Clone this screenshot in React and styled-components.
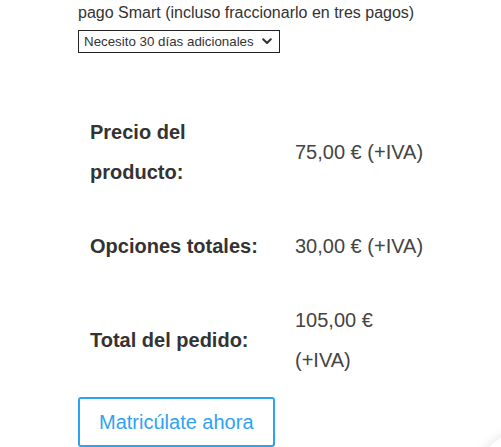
import React from "react";
import styled, { createGlobalStyle } from "styled-components";

const GlobalStyle = createGlobalStyle`
  html, body { margin: 0; padding: 0; background: #fff; }
  body { font-family: "Liberation Sans", Arial, sans-serif; overflow: hidden; }
`;

const Page = styled.div`
  width: 501px;
  height: 447px;
  padding-left: 78px;
  box-sizing: border-box;
  overflow: hidden;
`;

const Intro = styled.p`
  margin: 0;
  padding-top: 1px;
  font-size: 16px;
  line-height: 24px;
  color: #333;
`;

const SelectWrap = styled.div`
  position: relative;
  width: 202px;
  margin-top: 5px;
`;

const Select = styled.select`
  display: block;
  width: 100%;
  height: 23px;
  padding: 0 22px 0 5px;
  font-family: "Liberation Sans", Arial, sans-serif;
  font-size: 13.333px;
  color: #333;
  background: #fff;
  border: 1px solid #222;
  border-radius: 0;
  box-sizing: border-box;
  appearance: none;
  -webkit-appearance: none;
`;

const Chevron = styled.svg`
  position: absolute;
  right: 8px;
  top: 8px;
  width: 10px;
  height: 7px;
  pointer-events: none;
`;

const Table = styled.table`
  margin-top: 42px;
  border-collapse: collapse;
  font-size: 20px;
  line-height: 40px;
`;

const Label = styled.th`
  width: 181px;
  padding: 17px 12px;
  text-align: left;
  vertical-align: middle;
  font-weight: 700;
  color: #333;
`;

const Value = styled.td`
  width: 136px;
  padding: 17px 12px;
  vertical-align: middle;
  color: #444;
`;

const Button = styled.a`
  display: block;
  width: fit-content;
  padding: 6px 19px;
  font-size: 20px;
  line-height: 34px;
  color: #2ea3f2;
  border: 2px solid #2ea3f2;
  border-radius: 3px;
  text-decoration: none;
`;

const FloatingShadow = styled.div`
  position: fixed;
  left: 474px;
  top: 430px;
  width: 110px;
  height: 110px;
  border-radius: 50%;
  background: #fff;
  box-shadow: 0 0 12px rgba(0, 0, 0, 0.12);
`;

const rows = [
  ["Precio del producto:", "75,00 € (+IVA)"],
  ["Opciones totales:", "30,00 € (+IVA)"],
  ["Total del pedido:", "105,00 € (+IVA)"],
];

export default function App() {
  return (
    <>
      <GlobalStyle />
      <Page>
        <Intro>pago Smart (incluso fraccionarlo en tres pagos)</Intro>
        <SelectWrap>
          <Select defaultValue="30">
            <option value="30">Necesito 30 días adicionales (+30,00 €)</option>
            <option value="0">No necesito días adicionales</option>
          </Select>
          <Chevron viewBox="0 0 10 7">
            <path d="M1.2 1.2 L5 5 L8.8 1.2" fill="none" stroke="#333" strokeWidth="2" strokeLinecap="round" strokeLinejoin="round" />
          </Chevron>
        </SelectWrap>
        <Table>
          <tbody>
            {rows.map(([l, v]) => (
              <tr key={l}>
                <Label>{l}</Label>
                <Value>{v}</Value>
              </tr>
            ))}
          </tbody>
        </Table>
        <Button href="#">Matricúlate ahora</Button>
      </Page>
      <FloatingShadow />
    </>
  );
}
